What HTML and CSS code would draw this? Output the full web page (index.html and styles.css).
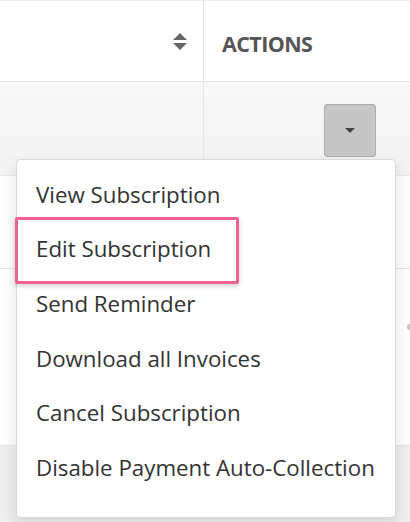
FILE: index.html
```html
<!DOCTYPE html>
<html>
<head>
<meta charset="utf-8">
<link rel="stylesheet" href="styles.css">
</head>
<body>
<div class="page">
  <div class="table">
    <div class="row head">
      <div class="cell left"><svg class="sort" width="14" height="18" viewBox="0 0 14 18"><path d="M7 0 L14 7 L0 7 Z M0 10 L14 10 L7 17 Z" fill="#666"/></svg></div>
      <div class="cell right"><span class="th">ACTIONS</span></div>
    </div>
    <div class="row r1">
      <div class="cell left"></div>
      <div class="cell right"><button class="btn"><span class="caret"></span></button></div>
    </div>
    <div class="row r2"></div>
    <div class="row r3"><span class="edge"></span></div>
    <div class="foot"></div>
  </div>
  <ul class="menu">
    <li>View Subscription</li>
    <li class="hl">Edit Subscription</li>
    <li>Send Reminder</li>
    <li>Download all Invoices</li>
    <li>Cancel Subscription</li>
    <li>Disable Payment Auto-Collection</li>
  </ul>
</div>
</body>
</html>
```
FILE: styles.css
```css
* { box-sizing: border-box; }
html, body { margin: 0; padding: 0; }
body { width: 410px; height: 522px; overflow: hidden; background: #fff; font-family: "Open Sans", sans-serif; }
.page { position: relative; width: 410px; height: 522px; }
.table { display: flex; flex-direction: column; height: 100%; border-top: 1px solid #eee; }
.row { display: flex; border-bottom: 1px solid #e2e2e2; }
.cell { display: flex; align-items: center; }
.left { width: 204px; border-right: 1px solid #e6e6e6; justify-content: flex-end; padding-right: 16px; }
.right { flex: 1; padding-left: 18px; }
.head { height: 81px; }
.th { font-weight: 700; font-size: 21.5px; color: #555; letter-spacing: -0.6px; margin-top: 4px; }
.sort { margin-top: 1px; }
.r1 { height: 94px; background: linear-gradient(#f8f8f8, #f3f3f3); border-bottom: 1px solid #e8e8e8; }
.r1 .right { justify-content: flex-end; padding-right: 34px; }
.btn { width: 52px; height: 53px; background: #c6c6c6; border: 1px solid #adadad; border-radius: 3px; padding: 0; display: flex; align-items: center; justify-content: center; margin-top: 3px; }
.caret { width: 0; height: 0; border-left: 5px solid transparent; border-right: 5px solid transparent; border-top: 5px solid #444; }
.r2 { height: 93px; background: #fff; border-bottom: 1px solid #e4e4e4; }
.r3 { flex: 1; border-bottom: none; justify-content: flex-end; align-items: center; padding-bottom: 60px; }
.edge { width: 3px; height: 6px; background: #c8c8c8; border-radius: 2px 0 0 2px; }
.foot { height: 77px; background: #efefef; border-top: 1px solid #e6e6e6; }
.menu { position: absolute; left: 16px; top: 159px; width: 380px; height: 359px; margin: 0; padding: 7px 0; list-style: none; background: #fff; border: 1px solid #d9d9d9; border-radius: 4px; box-shadow: 0 6px 16px rgba(0,0,0,0.12); display: flex; flex-direction: column; }
.menu li { height: 54.6px; display: flex; align-items: center; padding-left: 19px; font-size: 22.3px; color: #333; position: relative; }
.menu li.hl::before { content: ""; position: absolute; left: -2px; width: 218px; height: 61px; top: -5px; border: 3px solid #f06292; border-radius: 2px; box-shadow: 0 2px 5px rgba(0,0,0,0.18); }
```
